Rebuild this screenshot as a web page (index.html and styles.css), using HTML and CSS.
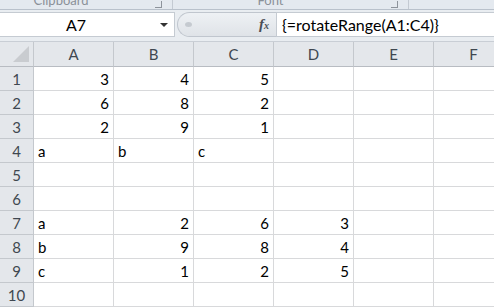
FILE: index.html
```html
<!DOCTYPE html>
<html lang="en">
<head>
  <meta charset="UTF-8">
  <title>rotateRange</title>
  <link rel="stylesheet" href="styles.css">
</head>
<body>
  <div class="ribbon">
    <div class="group group-clip">
      <span class="label">Clipboard</span>
      <span class="launcher"></span>
    </div>
    <div class="group group-font">
      <span class="label">Font</span>
      <span class="launcher"></span>
    </div>
    <div class="group group-rest"></div>
  </div>

  <div class="formula-bar">
    <div class="name-box">
      <span class="name">A7</span>
      <span class="arrow"></span>
    </div>
    <div class="pill">
      <span class="grip"></span>
      <span class="fx">f<sub>x</sub></span>
    </div>
    <div class="formula">{=rotateRange(A1:C4)}</div>
  </div>

  <div class="sheet" id="sheet"></div>

  <script>
    const sheet = document.getElementById('sheet');
    const cols = ['A', 'B', 'C', 'D', 'E', 'F'];
    const data = {
      1: ['3', '4', '5'],
      2: ['6', '8', '2'],
      3: ['2', '9', '1'],
      4: ['a', 'b', 'c'],
      7: ['a', '2', '6', '3'],
      8: ['b', '9', '8', '4'],
      9: ['c', '1', '2', '5']
    };

    function addCell(cls, text) {
      const div = document.createElement('div');
      div.className = cls;
      div.textContent = text;
      sheet.appendChild(div);
    }

    addCell('corner', '');
    cols.forEach(col => addCell('col-head', col));

    for (let row = 1; row <= 10; row++) {
      addCell('row-head', row);
      const values = data[row] || [];
      cols.forEach((col, i) => {
        const value = values[i] || '';
        const isNum = value !== '' && !isNaN(value);
        addCell(`cell ${isNum ? 'num' : ''}`, value);
      });
    }
  </script>
</body>
</html>
```

FILE: styles.css
```css
body {
  margin: 0;
  width: 494px;
  height: 308px;
  overflow: hidden;
  background: #fff;
  font-family: Lato, "Open Sans", sans-serif;
  color: #000;
}

.ribbon {
  display: flex;
  height: 9px;
  overflow: hidden;
  background: #e4e9ef;
  border-bottom: 1px solid #b9c1cb;
}

.group {
  position: relative;
  display: flex;
  justify-content: center;
  align-items: flex-end;
  border-right: 1px solid #c4cad2;
}

.group-clip {
  width: 172px;
}

.group-font {
  width: 235px;
}

.group-rest {
  flex: 1;
  border-right: none;
}

.label {
  font-size: 13px;
  line-height: 13px;
  color: #8a9098;
  margin-bottom: 2px;
}

.group-clip .label {
  margin-right: 50px;
}

.group-font .label {
  margin-right: 40px;
}

.launcher {
  position: absolute;
  right: 10px;
  bottom: 1px;
  width: 6px;
  height: 6px;
  border-right: 1px solid #8d939b;
  border-bottom: 1px solid #8d939b;
}

.formula-bar {
  display: flex;
  align-items: stretch;
  height: 25px;
  padding: 2px 0 4px 0;
  background: #e9edf1;
  border-bottom: 1px solid #c9ced5;
}

.name-box {
  position: relative;
  width: 174px;
  background: #fff;
  border: 1px solid #c5cbd2;
  border-left: none;
  display: flex;
  align-items: center;
}

.name {
  width: 152px;
  text-align: center;
  font-size: 16px;
}

.arrow {
  width: 0;
  height: 0;
  border-left: 4px solid transparent;
  border-right: 4px solid transparent;
  border-top: 4px solid #333;
  margin-left: 8px;
}

.pill {
  display: flex;
  align-items: center;
  justify-content: space-between;
  width: 98px;
  margin-left: 2px;
  border: 1px solid #c0c6ce;
  border-right: none;
  border-radius: 13px 0 0 13px;
  background: linear-gradient(#eef1f4, #dfe3e8);
}

.grip {
  width: 7px;
  height: 5px;
  margin-left: 7px;
  border-radius: 50%;
  background: #c5cad0;
}

.fx {
  font-family: "Liberation Serif", serif;
  font-style: italic;
  font-weight: bold;
  font-size: 15px;
  color: #4a4f55;
  margin-right: 7px;
}

.fx sub {
  font-size: 10px;
  vertical-align: 0;
}

.formula {
  flex: 1;
  background: #fff;
  border: 1px solid #c5cbd2;
  border-right: none;
  font-size: 16px;
  line-height: 23px;
  padding-left: 5px;
}

.sheet {
  display: grid;
  grid-template-columns: 34px repeat(6, 80px);
  grid-template-rows: 25px repeat(10, 24px);
  font-size: 15px;
}

.corner,
.col-head,
.row-head {
  background: #e4e7eb;
  color: #3f4750;
  border-right: 1px solid #c4c8cd;
  border-bottom: 1px solid #b8bcc2;
  display: flex;
  align-items: center;
  justify-content: center;
  box-sizing: border-box;
}

.corner {
  position: relative;
}

.corner::after {
  content: '';
  position: absolute;
  right: 4px;
  bottom: 4px;
  width: 0;
  height: 0;
  border-left: 16px solid transparent;
  border-bottom: 16px solid #c9ccd0;
}

.row-head {
  border-bottom-color: #c4c8cd;
}

.cell {
  border-right: 1px solid #d8d9db;
  border-bottom: 1px solid #d8d9db;
  box-sizing: border-box;
  padding: 0 4px;
  display: flex;
  align-items: center;
  padding-top: 1px;
}

.cell.num {
  justify-content: flex-end;
}
```
